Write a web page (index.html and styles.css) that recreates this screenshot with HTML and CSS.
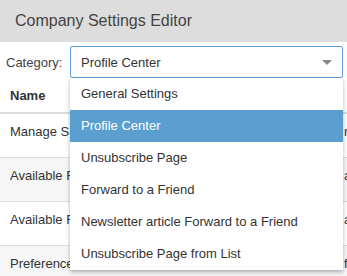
FILE: index.html
```html
<!DOCTYPE html>
<html lang="en">
<head>
  <meta charset="UTF-8" />
  <title>Company Settings Editor</title>
  <meta name="viewport" content="width=device-width, initial-scale=1.0" />
  <link rel="stylesheet" href="styles.css">
</head>
<body>

  <div class="page-header">Company Settings Editor</div>

  <div class="filter-row">
    <label for="category">Category:</label>
    <div class="select-wrap">
      <div class="select-box" id="category">
        <span>Profile Center</span>
        <span class="caret"></span>
      </div>
      <ul class="dropdown">
        <li>General Settings</li>
        <li class="active">Profile Center</li>
        <li>Unsubscribe Page</li>
        <li>Forward to a Friend</li>
        <li>Newsletter article Forward to a Friend</li>
        <li>Unsubscribe Page from List</li>
      </ul>
    </div>
  </div>

  <table class="settings-table">
    <thead>
      <tr>
        <th class="col-name">Name</th>
        <th></th>
      </tr>
    </thead>
    <tbody>
      <tr>
        <td class="col-name">Manage Subscriptions</td>
        <td>rules</td>
      </tr>
      <tr>
        <td class="col-name">Available Fields</td>
        <td>all</td>
      </tr>
      <tr>
        <td class="col-name">Available Fields Order</td>
        <td>asc</td>
      </tr>
      <tr>
        <td class="col-name">Preference Center</td>
        <td>false</td>
      </tr>
    </tbody>
  </table>

</body>
</html>
```

FILE: styles.css
```css
body {
  font-family: 'Liberation Sans', Arial, sans-serif;
  font-size: 13px;
  color: #333;
  margin: 0;
  background: #fff;
  overflow: hidden;
}

.page-header {
  background: #dddddd;
  height: 42px;
  line-height: 42px;
  padding-left: 15px;
  font-size: 16px;
  color: #444;
}

.filter-row {
  display: flex;
  align-items: center;
  margin-top: 4px;
  padding-left: 6px;
}

.filter-row label {
  width: 64px;
  color: #444;
}

.select-wrap {
  position: relative;
  width: 273px;
}

.select-box {
  box-sizing: border-box;
  height: 32px;
  border: 1px solid #5b9bd5;
  border-radius: 2px;
  padding: 0 10px;
  display: flex;
  align-items: center;
  justify-content: space-between;
  color: #333;
}

.caret {
  width: 0;
  height: 0;
  border-left: 5px solid transparent;
  border-right: 5px solid transparent;
  border-top: 5px solid #888;
}

.dropdown {
  position: absolute;
  top: 32px;
  left: 0;
  right: 0;
  margin: 0;
  padding: 0;
  list-style: none;
  background: #fff;
  box-shadow: 0 2px 4px rgba(0, 0, 0, 0.3);
  z-index: 10;
}

.dropdown li {
  height: 32px;
  line-height: 32px;
  padding-left: 11px;
  color: #333;
  white-space: nowrap;
}

.dropdown li.active {
  background: #5a9fcf;
  color: #fff;
}

.settings-table {
  border-collapse: collapse;
  table-layout: fixed;
  width: 440px;
  white-space: nowrap;
}

.settings-table th,
.settings-table td {
  text-align: left;
  vertical-align: top;
  padding: 8px 10px;
  line-height: 20px;
  overflow: hidden;
}

.settings-table th {
  padding-bottom: 6px;
  border-bottom: 2px solid #ddd;
  color: #333;
}

.settings-table td {
  height: 27px;
  border-top: 1px solid #ddd;
}

.settings-table .col-name {
  width: 314px;
}

.settings-table tbody tr:nth-child(even) {
  background: #f6f6f6;
}
```
